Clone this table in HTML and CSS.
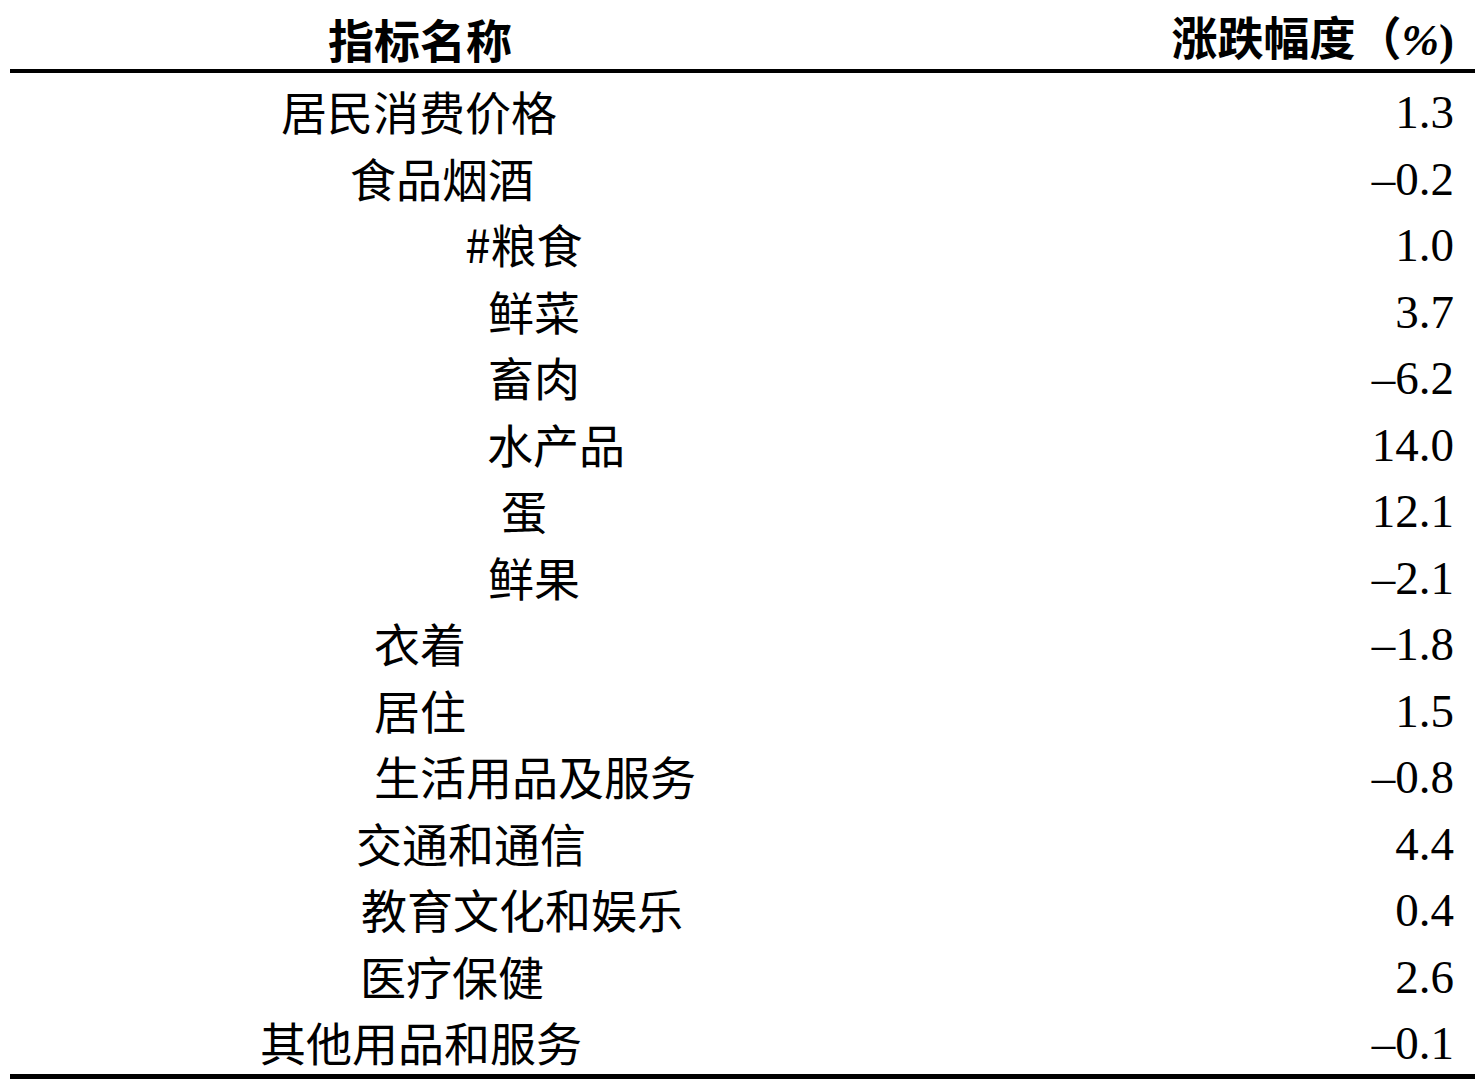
FILE: index.html
```html
<!DOCTYPE html>
<html lang="zh-CN">
<head>
<meta charset="utf-8">
<title>指标名称 涨跌幅度</title>
<link rel="stylesheet" href="styles.css">
</head>
<body>
<div class="table">
  <div class="head">
    <div class="h-name">指标名称</div>
    <div class="h-val">涨跌幅度（<span class="pct">%</span><span class="par">)</span></div>
  </div>
  <div class="body">
    <div class="row"><div class="name i1">居民消费价格</div><div class="val">1.3</div></div>
    <div class="row"><div class="name i2">食品烟酒</div><div class="val">–0.2</div></div>
    <div class="row"><div class="name i3">#粮食</div><div class="val">1.0</div></div>
    <div class="row"><div class="name i4">鲜菜</div><div class="val">3.7</div></div>
    <div class="row"><div class="name i4">畜肉</div><div class="val">–6.2</div></div>
    <div class="row"><div class="name i4b">水产品</div><div class="val">14.0</div></div>
    <div class="row"><div class="name i5">蛋</div><div class="val">12.1</div></div>
    <div class="row"><div class="name i4">鲜果</div><div class="val">–2.1</div></div>
    <div class="row"><div class="name i6">衣着</div><div class="val">–1.8</div></div>
    <div class="row"><div class="name i6">居住</div><div class="val">1.5</div></div>
    <div class="row"><div class="name i6">生活用品及服务</div><div class="val">–0.8</div></div>
    <div class="row"><div class="name i7">交通和通信</div><div class="val">4.4</div></div>
    <div class="row"><div class="name i8">教育文化和娱乐</div><div class="val">0.4</div></div>
    <div class="row"><div class="name i9">医疗保健</div><div class="val">2.6</div></div>
    <div class="row"><div class="name i10">其他用品和服务</div><div class="val">–0.1</div></div>
  </div>
</div>
</body>
</html>
```
FILE: styles.css
```css
html, body {
  margin: 0;
  padding: 0;
  background: #ffffff;
}
body {
  width: 1475px;
  height: 1082px;
  overflow: hidden;
  color: #000000;
  font-family: "Noto Sans CJK SC", "Noto Sans", sans-serif;
}
.table {
  margin-left: 10px;
  width: 1465px;
}
.head {
  height: 73px;
  box-sizing: border-box;
  padding-top: 6px;
  display: flex;
  align-items: center;
  border-bottom: 4px solid #000;
  font-weight: 700;
  font-size: 46px;
  line-height: 60px;
}
.h-name {
  flex: 1;
  padding-left: 318px;
}
.h-val {
  padding-right: 21px;
  white-space: nowrap;
}
.pct {
  font-family: "Liberation Serif", serif;
  font-style: italic;
  font-weight: 700;
  font-size: 45px;
}
.par {
  font-family: "Liberation Serif", serif;
  font-weight: 700;
  font-size: 45px;
}
.body {
  padding-top: 4px;
  border-bottom: 5px solid #000;
  height: 997px;
  box-sizing: content-box;
}
.row {
  display: flex;
  align-items: center;
  height: 66.5px;
}
.name {
  flex: 1;
  font-size: 46px;
  line-height: 66px;
  white-space: nowrap;
}
.val {
  padding-right: 21px;
  padding-top: 4px;
  font-family: "Liberation Serif", serif;
  font-size: 47px;
  line-height: 62px;
  text-align: right;
}
.i1 { padding-left: 271px; }
.i2 { padding-left: 340px; }
.i3 { padding-left: 455px; }
.i4 { padding-left: 478px; }
.i4b { padding-left: 477px; }
.i5 { padding-left: 491px; }
.i6 { padding-left: 364px; }
.i7 { padding-left: 346px; }
.i8 { padding-left: 351px; }
.i9 { padding-left: 350px; }
.i10 { padding-left: 250px; }
```
